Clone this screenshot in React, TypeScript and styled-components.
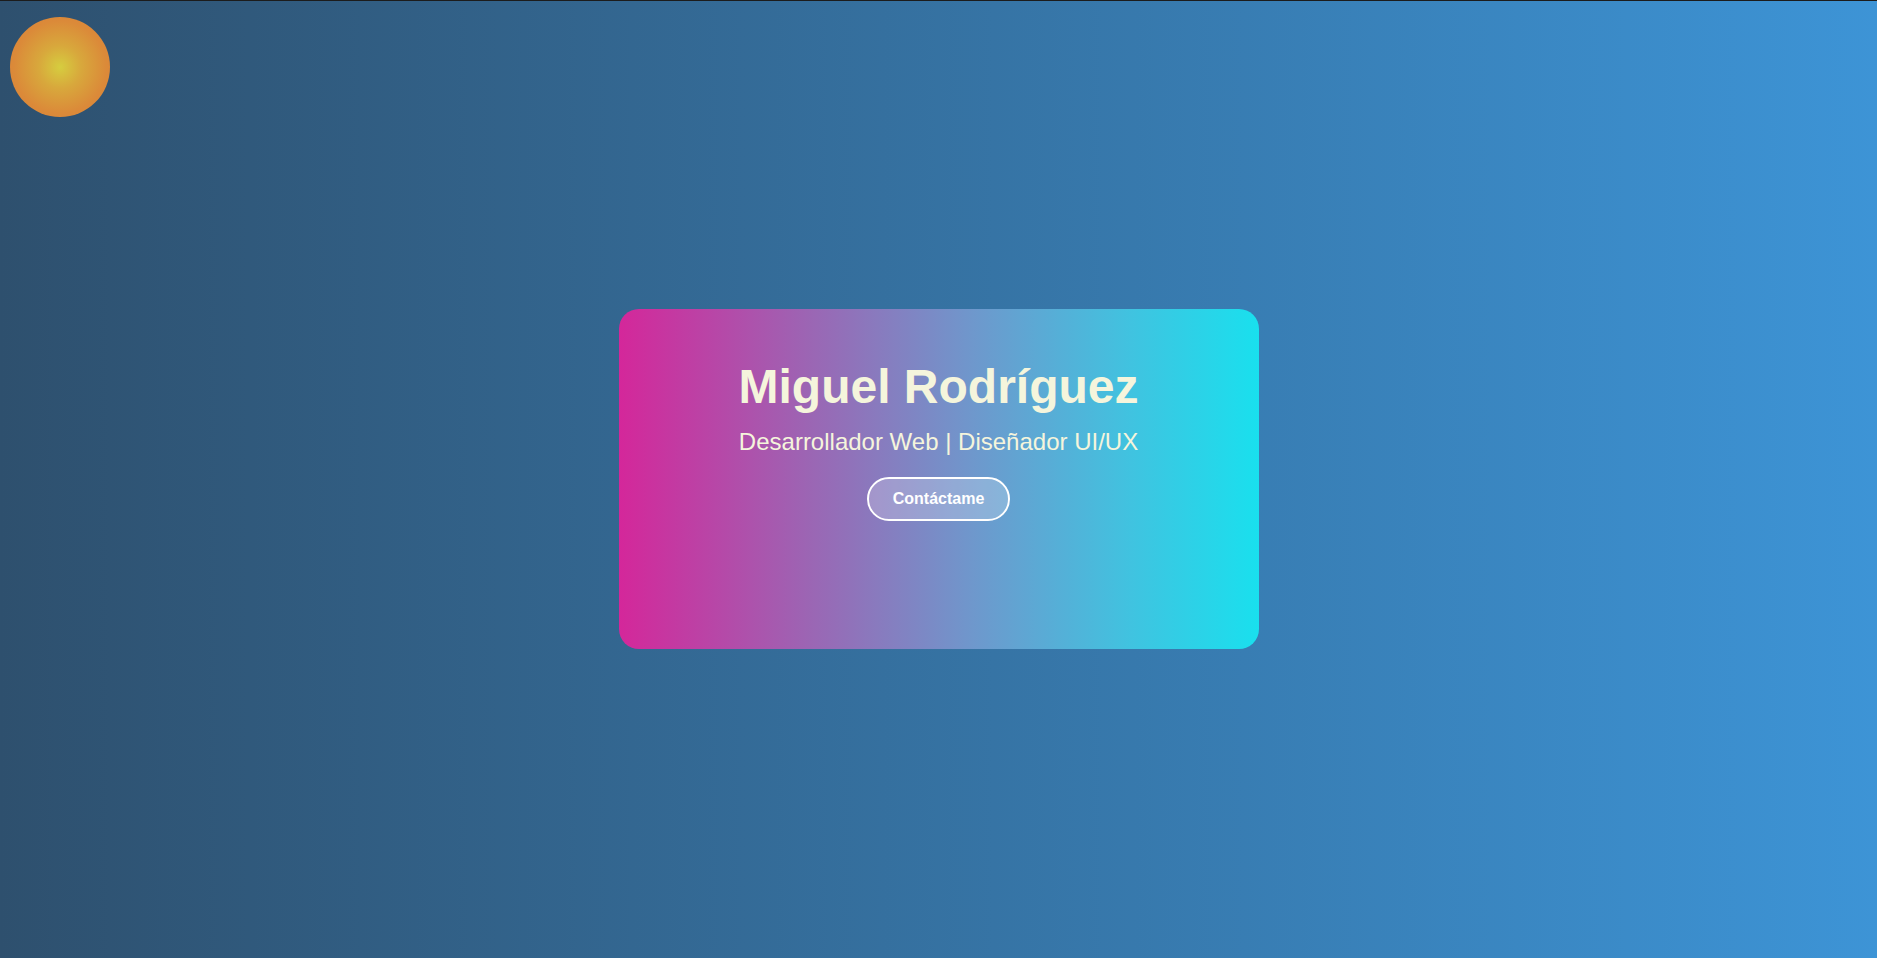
import React from "react";
import styled, { createGlobalStyle } from "styled-components";

const GlobalStyle = createGlobalStyle`
  html, body {
    margin: 0;
    padding: 0;
    height: 100%;
  }
  body {
    font-family: "Liberation Sans", Arial, sans-serif;
    background: #1c1c1c;
  }
  #root {
    height: 100%;
  }
`;

const Page = styled.main`
  position: relative;
  box-sizing: border-box;
  height: 958px;
  border-top: 1px solid #1c1c1c;
  background: linear-gradient(to right, #2e506e 0%, #3d94d6 100%);
  display: flex;
  align-items: center;
  justify-content: center;
  overflow: hidden;
`;

const Sun = styled.div`
  position: absolute;
  left: 10px;
  top: 16px;
  width: 100px;
  height: 100px;
  border-radius: 50%;
  background: radial-gradient(circle at 50% 50%, #d6cd3f 0%, #d8a83c 30%, #db8a39 65%, #d97f38 100%);
`;

const Card = styled.section`
  box-sizing: border-box;
  width: 640px;
  height: 340px;
  margin-top: -1px;
  border-radius: 20px;
  padding-top: 50px;
  background: linear-gradient(to right, #d4279a 0%, #9b66b4 30%, #6f97cc 55%, #40c3e0 80%, #19e0ee 100%);
  display: flex;
  flex-direction: column;
  align-items: center;
  text-align: center;
`;

const Name = styled.h1`
  margin: 0 0 14px;
  font-size: 48px;
  font-weight: 700;
  color: #f5f5dc;
`;

const Role = styled.p`
  margin: 0 0 21px;
  font-size: 24px;
  font-weight: 400;
  color: #f5f5dc;
`;

const ContactButton = styled.button`
  box-sizing: border-box;
  height: 44px;
  padding: 0 24px;
  border: 2px solid #ffffff;
  border-radius: 22px;
  background: rgba(255, 255, 255, 0.22);
  color: #ffffff;
  font-family: "Liberation Sans", Arial, sans-serif;
  font-size: 16px;
  font-weight: 700;
  line-height: 18px;
  cursor: pointer;
`;

export default function App() {
  return (
    <>
      <GlobalStyle />
      <Page>
        <Sun />
        <Card>
          <Name>Miguel Rodríguez</Name>
          <Role>Desarrollador Web | Diseñador UI/UX</Role>
          <ContactButton>Contáctame</ContactButton>
        </Card>
      </Page>
    </>
  );
}
